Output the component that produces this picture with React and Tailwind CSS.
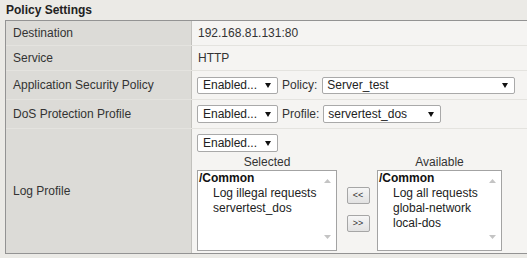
import React from "react";

function Arrow({ color = "#111" }) {
  return (
    <svg width="6" height="5" viewBox="0 0 6 5" className="shrink-0">
      <polygon points="0,0 6,0 3,5" fill={color} />
    </svg>
  );
}

function Select({ value, width, pl = "pl-[5px]", h = "h-[17px]" }) {
  return (
    <div
      className={`${width} ${h} ${pl} pr-[6px] flex items-center justify-between bg-white border border-[#a9a9a9] rounded-[2px] text-[#222] shrink-0`}
    >
      <span className="leading-none">{value}</span>
      <Arrow />
    </div>
  );
}

function ListBox({ width, items }) {
  return (
    <div className={`${width} h-[81px] flex bg-white border border-[#a3a3a3] text-[#222]`}>
      <div className="flex-1 pl-[1px] leading-[15px] whitespace-nowrap">
        <div className="font-bold text-[#111]">/Common</div>
        {items.map((it) => (
          <div key={it} className="pl-[14px]">
            {it}
          </div>
        ))}
      </div>
      <div className="w-[17px] flex flex-col items-center justify-between pt-[8px] pb-[11px]">
        <svg width="7" height="4" viewBox="0 0 7 4">
          <polygon points="0,4 7,4 3.5,0" fill="#c4c4c4" />
        </svg>
        <svg width="7" height="4" viewBox="0 0 7 4">
          <polygon points="0,0 7,0 3.5,4" fill="#c4c4c4" />
        </svg>
      </div>
    </div>
  );
}

function MoveButton({ label }) {
  return (
    <button className="w-[23px] h-[17px] flex items-center justify-center bg-gradient-to-b from-[#f6f6f6] to-[#e2e2e2] border border-[#a6a6a6] rounded-[2px] text-[9px] leading-none text-[#333]">
      {label}
    </button>
  );
}

function Row({ label, h, children, last }) {
  return (
    <div className={`flex ${h} ${last ? "" : "border-b border-[#e4e3df]"}`}>
      <div className="w-[186px] shrink-0 bg-[#dcdbd7] border-r border-[#c2c1bd] pl-[7px] flex items-center">
        {label}
      </div>
      <div className="flex-1 bg-[#f5f4f2] pl-[5px] flex items-center">{children}</div>
    </div>
  );
}

export default function App() {
  return (
    <div className="w-[527px] h-[258px] overflow-hidden bg-[#ebeae6] text-[12px] text-[#333] font-['Liberation_Sans',Arial,sans-serif]">
      <div className="h-[20px] pl-[6px] flex items-center font-bold text-[#222]">
        Policy Settings
      </div>

      <div className="ml-[5px] border-t border-l border-b border-[#939393]">
        <Row label="Destination" h="h-[25px]">
          <span className="ml-[1px]">192.168.81.131:80</span>
        </Row>
        <Row label="Service" h="h-[25px]">
          <span className="ml-[1px]">HTTP</span>
        </Row>
        <Row label="Application Security Policy" h="h-[29px]">
          <Select value="Enabled..." width="w-[81px]" />
          <span className="ml-[4px] mr-[5px]">Policy:</span>
          <Select value="Server_test" width="w-[193px]" pl="pl-[4px]" />
        </Row>
        <Row label="DoS Protection Profile" h="h-[29px]">
          <Select value="Enabled..." width="w-[81px]" h="h-[18px]" />
          <span className="ml-[4px] mr-[4px]">Profile:</span>
          <Select value="servertest_dos" width="w-[118px]" pl="pl-[4px]" h="h-[18px]" />
        </Row>

        {/* log profile: select + dual list */}
        <div className="flex h-[124px]">
          <div className="w-[186px] shrink-0 bg-[#dcdbd7] border-r border-[#c2c1bd] pl-[7px] flex items-center">
            Log Profile
          </div>
          <div className="flex-1 bg-[#f5f4f2] pl-[5px] pt-[5px] flex flex-col">
            <Select value="Enabled..." width="w-[81px]" h="h-[18px]" />
            <div className="flex mt-[2px]">
              <div className="w-[142px] flex flex-col">
                <div className="w-[140px] h-[16px] leading-[16px] text-center">Selected</div>
                <ListBox width="w-[140px]" items={["Log illegal requests", "servertest_dos"]} />
              </div>
              <div className="w-[38px] flex flex-col items-center pt-[33px] gap-[11px]">
                <MoveButton label="<<" />
                <MoveButton label=">>" />
              </div>
              <div className="flex flex-col">
                <div className="h-[16px] leading-[16px] text-center">Available</div>
                <ListBox
                  width="w-[125px]"
                  items={["Log all requests", "global-network", "local-dos"]}
                />
              </div>
            </div>
          </div>
        </div>
      </div>
    </div>
  );
}
